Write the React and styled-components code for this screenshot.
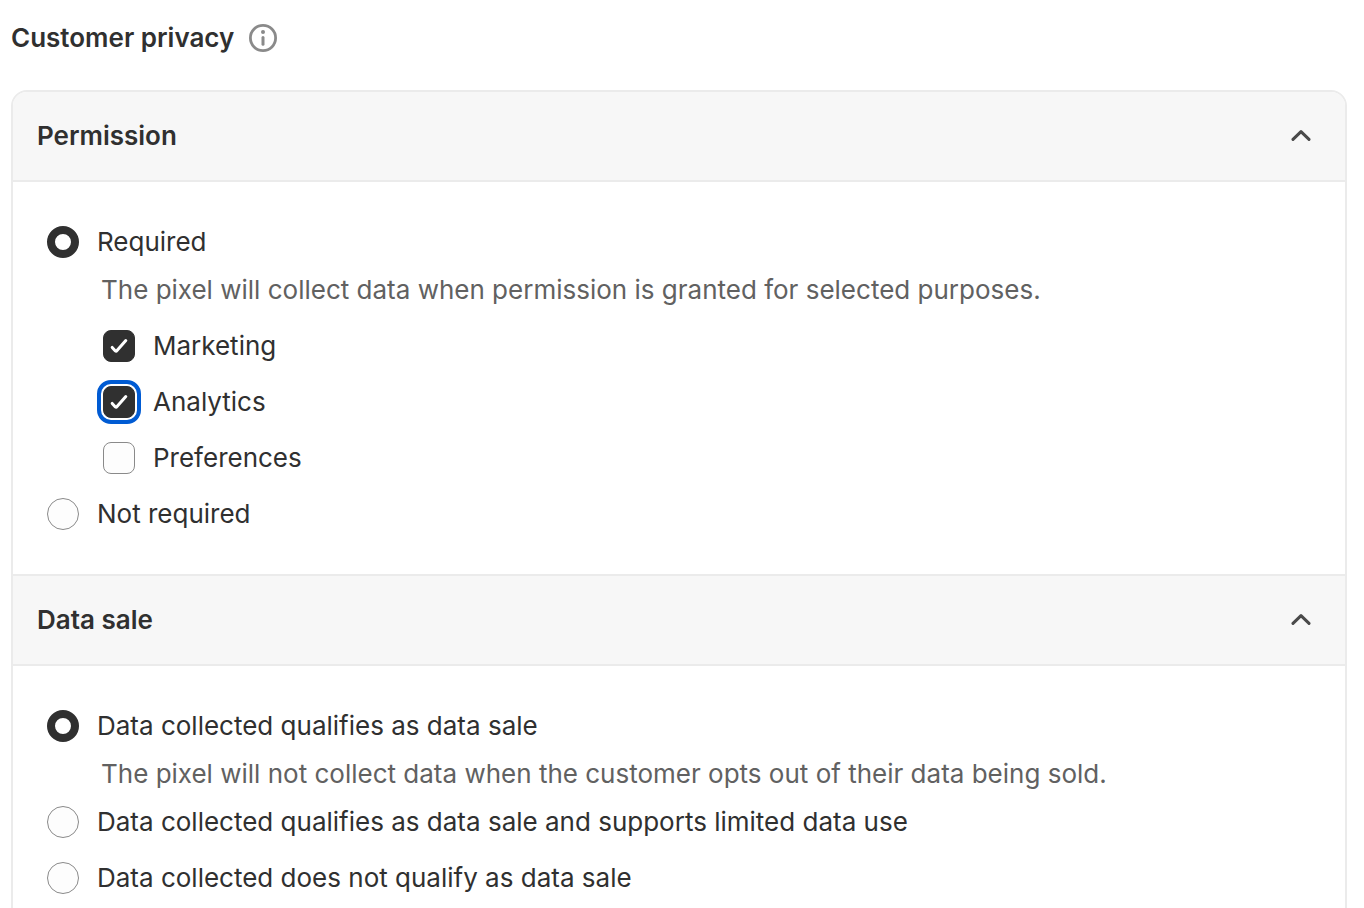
import React, { useState } from "react";
import styled, { createGlobalStyle } from "styled-components";

const GlobalStyle = createGlobalStyle`
  * {
    box-sizing: border-box;
  }
  body {
    margin: 0;
    background: #fff;
    color: #303030;
    font-family: Inter, "Liberation Sans", sans-serif;
    font-size: 26px;
    line-height: 40px;
    font-weight: 420;
  }
`;

const Page = styled.main`
  padding: 18px 17px 32px 11px;
`;

const TitleRow = styled.div`
  display: flex;
  align-items: center;
  gap: 14px;
  margin-bottom: 32px;
`;

const Title = styled.h1`
  margin: 0;
  font-size: 26px;
  line-height: 40px;
  font-weight: 625;
`;

const InfoButton = styled.button`
  display: flex;
  padding: 0;
  border: 0;
  background: none;
  color: #8a8a8a;
  cursor: pointer;
`;

const Card = styled.div`
  border: 2px solid #ebebeb;
  border-radius: 16px;
  overflow: hidden;
`;

const Section = styled.section`
  & + & {
    border-top: 2px solid #ebebeb;
  }
`;

const SectionHeading = styled.h2`
  margin: 0;
  font-size: 26px;
  line-height: 40px;
`;

const SectionToggle = styled.button`
  display: flex;
  align-items: center;
  justify-content: space-between;
  width: 100%;
  padding: 24px 34px 24px 24px;
  border: 0;
  background: #f7f7f7;
  color: #303030;
  font: inherit;
  font-weight: 625;
  text-align: left;
  cursor: pointer;
`;

const Chevron = styled.svg`
  color: #4a4a4a;
  transform: ${({ $open }) => ($open ? "none" : "rotate(180deg)")};
`;

const SectionBody = styled.div`
  padding: 32px 34px;
  border-top: 2px solid #ebebeb;
`;

const ChoiceLabel = styled.label`
  display: flex;
  align-items: center;
  gap: 18px;
  width: fit-content;
  padding: 8px 0;
  cursor: pointer;
`;

const HelpText = styled.p`
  margin: 0;
  padding-left: 54px;
  color: #616161;
`;

const SubChoices = styled.div`
  padding: 8px 0 0 56px;
`;

const RadioInput = styled.input`
  appearance: none;
  flex: none;
  width: 32px;
  height: 32px;
  margin: 0;
  border: 1px solid #8a8a8a;
  border-radius: 50%;
  background: #fdfdfd;

  &:checked {
    border: 8px solid #303030;
    background: #fff;
  }
`;

const CheckControl = styled.span`
  display: grid;
  flex: none;

  > * {
    grid-area: 1 / 1;
  }
`;

const CheckInput = styled.input`
  appearance: none;
  width: 32px;
  height: 32px;
  margin: 0;
  border: 1px solid #8a8a8a;
  border-radius: 8px;
  background: #fdfdfd;

  &:checked {
    border-color: #303030;
    background: #303030;
  }

  &:focus {
    outline: 4px solid #005bd3;
    outline-offset: 2px;
  }
`;

const CheckMark = styled.svg`
  color: #fff;
  pointer-events: none;
`;

const Radio = ({ id, name, label, help, checked, onChange, children }) => (
  <div>
    <ChoiceLabel htmlFor={id}>
      <RadioInput
        type="radio"
        id={id}
        name={name}
        checked={checked}
        onChange={() => onChange(id)}
        aria-describedby={help ? `${id}-help` : undefined}
      />
      {label}
    </ChoiceLabel>
    {help && <HelpText id={`${id}-help`}>{help}</HelpText>}
    {children}
  </div>
);

const Checkbox = ({ id, label, checked, onChange, autoFocus }) => (
  <ChoiceLabel htmlFor={id}>
    <CheckControl>
      <CheckInput
        type="checkbox"
        id={id}
        checked={checked}
        onChange={() => onChange(id)}
        autoFocus={autoFocus}
      />
      {checked && (
        <CheckMark width="32" height="32" viewBox="0 0 32 32" fill="none" aria-hidden="true">
          <path
            d="M9.2 17.4L12.4 20.9Q13.1 21.6 13.8 20.8L22.8 10.6"
            stroke="currentColor"
            strokeWidth="3"
            strokeLinecap="round"
            strokeLinejoin="round"
          />
        </CheckMark>
      )}
    </CheckControl>
    {label}
  </ChoiceLabel>
);

const Panel = ({ id, title, children }) => {
  const [open, setOpen] = useState(true);

  return (
    <Section>
      <SectionHeading>
        <SectionToggle
          type="button"
          aria-expanded={open}
          aria-controls={id}
          onClick={() => setOpen(!open)}
        >
          {title}
          <Chevron $open={open} width="20" height="20" viewBox="0 0 20 20" fill="none" aria-hidden="true">
            <path
              d="M2 13.4L10 5.6L18 13.4"
              stroke="currentColor"
              strokeWidth="3"
              strokeLinecap="round"
              strokeLinejoin="round"
            />
          </Chevron>
        </SectionToggle>
      </SectionHeading>
      {open && <SectionBody id={id}>{children}</SectionBody>}
    </Section>
  );
};

const App = () => {
  const [permission, setPermission] = useState("required");
  const [dataSale, setDataSale] = useState("sale");
  const [purposes, setPurposes] = useState({
    marketing: true,
    analytics: true,
    preferences: false,
  });

  const togglePurpose = (id) => setPurposes({ ...purposes, [id]: !purposes[id] });

  return (
    <>
      <GlobalStyle />
      <Page>
        <TitleRow>
          <Title>Customer privacy</Title>
          <InfoButton type="button" aria-label="About customer privacy">
            <svg width="30" height="30" viewBox="0 0 30 30" fill="none" aria-hidden="true">
              <circle cx="15" cy="15" r="12.6" stroke="currentColor" strokeWidth="2.8" />
              <circle cx="15" cy="9" r="2" fill="currentColor" />
              <path d="M15 14.4V21.2" stroke="currentColor" strokeWidth="3" strokeLinecap="round" />
            </svg>
          </InfoButton>
        </TitleRow>

        <Card>
          <Panel id="permission" title="Permission">
            <Radio
              id="required"
              name="permission"
              label="Required"
              help="The pixel will collect data when permission is granted for selected purposes."
              checked={permission === "required"}
              onChange={setPermission}
            >
              <SubChoices>
                <Checkbox
                  id="marketing"
                  label="Marketing"
                  checked={purposes.marketing}
                  onChange={togglePurpose}
                />
                <Checkbox
                  id="analytics"
                  label="Analytics"
                  checked={purposes.analytics}
                  onChange={togglePurpose}
                  autoFocus
                />
                <Checkbox
                  id="preferences"
                  label="Preferences"
                  checked={purposes.preferences}
                  onChange={togglePurpose}
                />
              </SubChoices>
            </Radio>
            <Radio
              id="not-required"
              name="permission"
              label="Not required"
              checked={permission === "not-required"}
              onChange={setPermission}
            />
          </Panel>

          <Panel id="data-sale" title="Data sale">
            <Radio
              id="sale"
              name="data-sale"
              label="Data collected qualifies as data sale"
              help="The pixel will not collect data when the customer opts out of their data being sold."
              checked={dataSale === "sale"}
              onChange={setDataSale}
            />
            <Radio
              id="sale-limited"
              name="data-sale"
              label="Data collected qualifies as data sale and supports limited data use"
              checked={dataSale === "sale-limited"}
              onChange={setDataSale}
            />
            <Radio
              id="no-sale"
              name="data-sale"
              label="Data collected does not qualify as data sale"
              checked={dataSale === "no-sale"}
              onChange={setDataSale}
            />
          </Panel>
        </Card>
      </Page>
    </>
  );
};

export default App;
